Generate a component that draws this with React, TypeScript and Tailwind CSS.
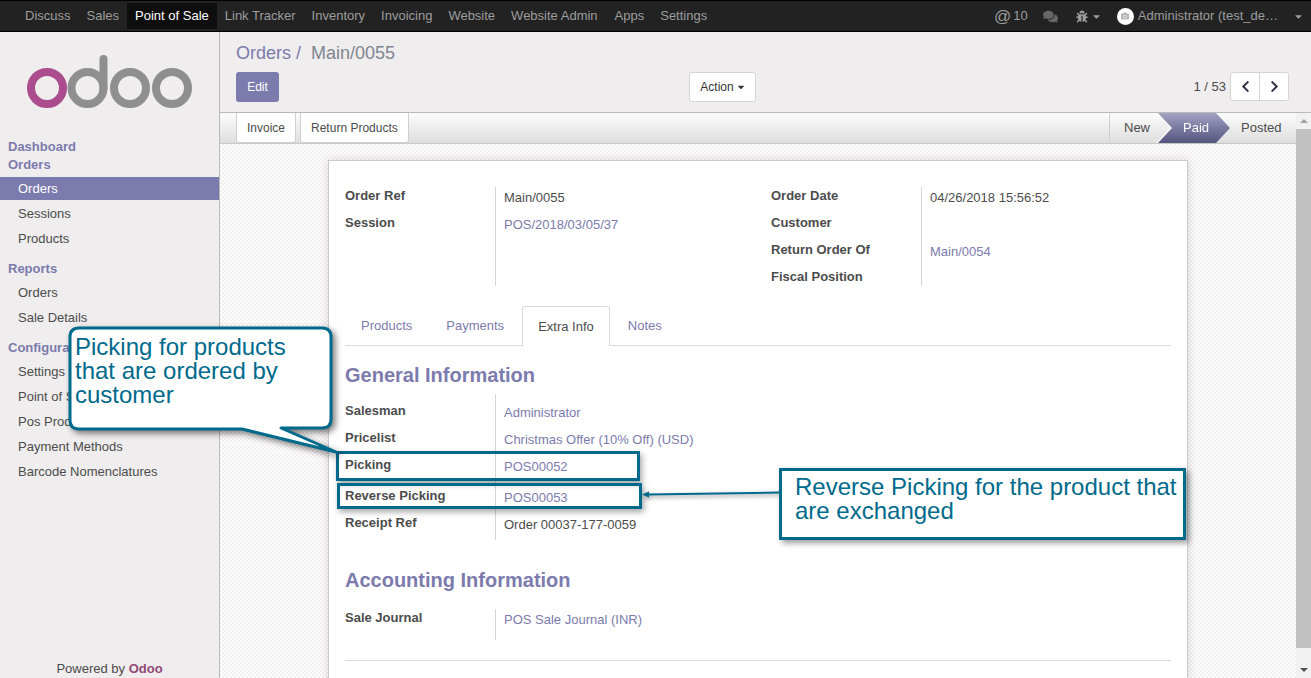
import { FaBug, FaCaretDown, FaCamera, FaChevronLeft, FaChevronRight, FaComments } from "react-icons/fa";

const navItems = ["Discuss", "Sales", "Point of Sale", "Link Tracker", "Inventory", "Invoicing", "Website", "Website Admin", "Apps", "Settings"];

type Row = { label: string; value?: string; link?: boolean; extra?: string };

const MenuHead = ({ text, className = "" }: { text: string; className?: string }) => (
  <div className={`h-[18px] pl-2 text-[13px] leading-[18px] font-bold text-[#7c7bad] ${className}`}>{text}</div>
);

const MenuItem = ({ text, active, className = "mt-[2px]" }: { text: string; active?: boolean; className?: string }) => (
  <div className={`h-[23px] pl-[18px] text-[13px] leading-[23px] ${active ? "bg-[#7c7bad] text-white" : "text-[#4c4c4c]"} ${className}`}>{text}</div>
);

const FieldGroup = ({
  rows,
  height,
  width,
  labelPad = "",
  valuePad = "pt-px",
}: {
  rows: Row[];
  height: string;
  width: string;
  labelPad?: string;
  valuePad?: string;
}) => (
  <div className={`flex ${height} ${width}`}>
    <div className={`w-[150px] ${labelPad}`}>
      {rows.map((r) => (
        <div key={r.label} className={`h-[27px] text-[13px] leading-[18px] font-bold text-[#4c4c4c] ${r.extra ?? ""}`}>{r.label}</div>
      ))}
    </div>
    <div className={`flex-1 overflow-hidden border-l border-[#d5d5d5] pl-2 ${valuePad}`}>
      {rows.map((r) => (
        <div key={r.label} className={`h-[27px] text-[13px] leading-[20px] ${r.link ? "text-[#7c7bad]" : "text-[#4c4c4c]"} ${r.extra ?? ""}`}>{r.value}</div>
      ))}
    </div>
  </div>
);

export default function App() {
  return (
    <div className="relative flex h-[678px] w-[1311px] flex-col overflow-hidden bg-white font-['Liberation_Sans',Arial,sans-serif] text-[13px] text-[#4c4c4c]">
      {/* top bar */}
      <div className="flex h-[32px] shrink-0 items-center border-y border-black bg-[#222222] pl-[17px]">
        {navItems.map((n) => (
          <div key={n} className={`h-[26px] px-2 text-[13px] leading-[26px] ${n === "Point of Sale" ? "bg-[#0e0e0e] text-white" : "text-[#9d9d9d]"} ${n === "Apps" ? "ml-px" : ""}`}>{n}</div>
        ))}
        <div className="ml-auto flex items-center text-[#9d9d9d]">
          <span className="text-[17px] leading-none">@</span>
          <span className="ml-[2px] text-[13px]">10</span>
          <FaComments className="ml-[15px] h-[15px] w-[15px] text-[#666666]" />
          <FaBug className="ml-[18px] h-[13px] w-[12px]" />
          <FaCaretDown className="ml-[4px] h-[11px] w-[9px]" />
          <div className="ml-[16px] flex h-[17px] w-[17px] items-center justify-center rounded-full bg-white">
            <FaCamera className="h-[8px] w-[8px] text-[#b5b5b5]" />
          </div>
          <span className="ml-[4px] text-[13px]">Administrator (test_de…</span>
          <FaCaretDown className="mr-[8px] ml-[16px] h-[11px] w-[9px]" />
        </div>
      </div>

      <div className="flex min-h-0 flex-1">
        {/* sidebar */}
        <div className="flex w-[220px] shrink-0 flex-col border-r border-[#b9b9b9] bg-[#efeded]">
          <div className="h-[106px] shrink-0">
            <svg width="219" height="105" viewBox="0 32 219 105">
              <circle cx="47" cy="88" r="16" fill="none" stroke="#ab4c8e" strokeWidth="8" />
              <g fill="none" stroke="#8f8f8f" strokeWidth="8">
                <circle cx="87.5" cy="88" r="16" />
                <path d="M103.5 88 V59" strokeLinecap="round" />
                <circle cx="130" cy="88" r="16" />
                <circle cx="172" cy="88" r="16" />
              </g>
            </svg>
          </div>
          <MenuHead text="Dashboard" />
          <MenuHead text="Orders" />
          <MenuItem text="Orders" active className="mt-[3px]" />
          <MenuItem text="Sessions" />
          <MenuItem text="Products" />
          <MenuHead text="Reports" className="mt-[10px]" />
          <MenuItem text="Orders" className="mt-[3px]" />
          <MenuItem text="Sale Details" />
          <MenuHead text="Configuration" className="mt-[10px]" />
          <MenuItem text="Settings" className="mt-[3px]" />
          <MenuItem text="Point of Sale" />
          <MenuItem text="Pos Products" />
          <MenuItem text="Payment Methods" />
          <MenuItem text="Barcode Nomenclatures" />
          <div className="mt-auto text-center text-[13px] leading-[18px] text-[#4c4c4c]">
            Powered by <span className="font-bold text-[#8f4a78]">Odoo</span>
          </div>
        </div>

        {/* main */}
        <div className="flex min-w-0 flex-1 flex-col">
          <div className="h-[81px] shrink-0 border-b border-[#b9b9b9] bg-[#efeded] pl-4">
            <div className="pt-[9px] text-[18px] leading-[24px] text-[#7f8593]">
              <span className="text-[#7c7bad]">Orders /</span>
              <span className="ml-[10px]">Main/0055</span>
            </div>
            <div className="mt-[7px] flex items-start">
              <div className="h-[30px] w-[43px] rounded-[3px] bg-[#7c7bad] text-center text-[12px] leading-[30px] text-white">Edit</div>
              <div className="ml-[410px] flex h-[30px] w-[67px] items-center justify-center gap-[3px] rounded-[3px] border border-[#d5d5d5] bg-white text-[12px] text-[#333333]">
                Action <FaCaretDown className="h-[10px] w-[8px]" />
              </div>
              <div className="mr-[22px] ml-auto flex items-center">
                <span className="mr-[4px] text-[13px] text-[#4c4c4c]">1 / 53</span>
                <div className="flex h-[29px] w-[59px] rounded-[3px] border border-[#d5d5d5] bg-white text-[#333344]">
                  <div className="flex flex-1 items-center justify-center border-r border-[#d5d5d5]"><FaChevronLeft className="h-[13px] w-[13px]" /></div>
                  <div className="flex flex-1 items-center justify-center"><FaChevronRight className="h-[13px] w-[13px]" /></div>
                </div>
              </div>
            </div>
          </div>

          <div className="flex min-h-0 flex-1">
            <div className="flex min-w-0 flex-1 flex-col">
              {/* statusbar */}
              <div className="flex h-[31px] shrink-0 items-start border-b border-[#c8c8c8] bg-gradient-to-b from-[#fcfcfc] to-[#dedede] pl-4">
                <div className="flex h-[30px] items-center rounded-b-[3px] border border-t-0 border-[#d0d0d0] bg-white px-[10px] text-[12px] text-[#4c4c4c]">Invoice</div>
                <div className="ml-[4px] flex h-[30px] items-center rounded-b-[3px] border border-t-0 border-[#d0d0d0] bg-white px-[10px] text-[12px] text-[#4c4c4c]">Return Products</div>
                <div className="ml-auto flex h-[30px] rounded-l-[3px] border-l border-[#cfcfcf] text-[13px] leading-[29px]">
                  <div className="w-[48px] pl-[14px] text-[#4c4c4c]">New</div>
                  <div className="[filter:drop-shadow(-2px_0_0_#fafafa)]">
                    <div className="h-[30px] w-[72px] bg-gradient-to-b from-[#a3a3c4] to-[#55557f] pl-[25px] text-white [clip-path:polygon(0_0,58px_0,72px_50%,58px_100%,0_100%,14px_50%)]">Paid</div>
                  </div>
                  <div className="w-[66px] pl-[11px] text-[#4c4c4c]">Posted</div>
                </div>
              </div>

              {/* form */}
              <div className="min-h-0 flex-1 bg-[repeating-conic-gradient(#f2f0f0_0_25%,#ffffff_0_50%)] bg-[length:4px_4px] pl-[108px] pt-4">
                <div className="h-[600px] w-[860px] border border-[#c9c9d4] bg-white px-4 pt-[26px] shadow-[0_0_10px_rgba(0,0,0,0.15)]">
                  <div className="flex">
                    <FieldGroup
                      width="w-[426px]"
                      height="h-[99px]"
                      rows={[
                        { label: "Order Ref", value: "Main/0055" },
                        { label: "Session", value: "POS/2018/03/05/37", link: true },
                      ]}
                    />
                    <FieldGroup
                      width="w-[400px]"
                      height="h-[99px]"
                      rows={[
                        { label: "Order Date", value: "04/26/2018 15:56:52" },
                        { label: "Customer" },
                        { label: "Return Order Of", value: "Main/0054", link: true },
                        { label: "Fiscal Position" },
                      ]}
                    />
                  </div>

                  <div className="mt-[20px] flex h-[40px] border-b border-[#d9d9d9] text-[13px] leading-[40px] text-[#7c7bad]">
                    <div className="mr-[2px] px-4">Products</div>
                    <div className="mr-[2px] px-4">Payments</div>
                    <div className="mr-[2px] h-[40px] rounded-t-[3px] border border-b-0 border-[#d9d9d9] bg-white px-[15px] text-[#4c4c4c]">Extra Info</div>
                    <div className="px-4">Notes</div>
                  </div>

                  <h2 className="mt-[18px] text-[20px] leading-[22px] font-bold text-[#7c7bad]">General Information</h2>
                  <div className="mt-[8px]">
                    <FieldGroup
                      width="w-full"
                      height="h-[146px]"
                      labelPad="pt-[8px]"
                      valuePad="pt-[9px]"
                      rows={[
                        { label: "Salesman", value: "Administrator", link: true },
                        { label: "Pricelist", value: "Christmas Offer (10% Off) (USD)", link: true },
                        { label: "Picking", value: "POS00052", link: true },
                        { label: "Reverse Picking", value: "POS00053", link: true, extra: "mt-[4px]" },
                        { label: "Receipt Ref", value: "Order 00037-177-0059" },
                      ]}
                    />
                  </div>

                  <h2 className="mt-[29px] text-[20px] leading-[22px] font-bold text-[#7c7bad]">Accounting Information</h2>
                  <div className="mt-[18px]">
                    <FieldGroup
                      width="w-full"
                      height="h-[31px]"
                      rows={[{ label: "Sale Journal", value: "POS Sale Journal (INR)", link: true }]}
                    />
                  </div>
                  <div className="mt-[20px] border-t border-[#d9d9d9]" />
                </div>
              </div>
            </div>

            {/* scrollbar */}
            <div className="flex w-[15px] shrink-0 flex-col items-center bg-[#f1f1f1]">
              <div className="mt-[6px] h-0 w-0 border-x-[4px] border-b-[4px] border-x-transparent border-b-[#a3a3a3]" />
              <div className="mt-[6px] h-[519px] w-full bg-[#c1c1c1]" />
              <div className="mt-auto mb-[6px] h-0 w-0 border-x-[4px] border-t-[4px] border-x-transparent border-t-[#505050]" />
            </div>
          </div>
        </div>
      </div>

      {/* annotations drawn over the page */}
      <div className="absolute top-[451px] left-[336px] h-[30px] w-[304px] border-[3px] border-[#006a8c] shadow-[2px_3px_6px_rgba(0,0,0,0.35)]" />
      <div className="absolute top-[483px] left-[337px] h-[26px] w-[305px] border-[3px] border-[#006a8c] shadow-[2px_3px_6px_rgba(0,0,0,0.35)]" />

      <svg className="absolute top-[320px] left-[60px] drop-shadow-[3px_3px_3px_rgba(0,0,0,0.5)]" width="290" height="140" viewBox="60 320 290 140">
        <path
          d="M79 328 H322 Q331 328 331 337 V419 Q331 428 322 428 H281 L336 452 L242 429 H79 Q70 429 70 420 V337 Q70 328 79 328 Z"
          fill="#ffffff"
          stroke="#006a8c"
          strokeWidth="3"
          strokeLinejoin="round"
        />
      </svg>
      <div className="absolute top-[335px] left-[75px] w-[250px] text-[24px] leading-[24px] text-[#006a8c]">
        Picking for products that are ordered by customer
      </div>

      <svg className="absolute top-[485px] left-[640px] drop-shadow-[1px_2px_2px_rgba(0,0,0,0.45)]" width="145" height="16" viewBox="640 485 145 16">
        <path d="M780 492.5 L648 494.5" stroke="#006a8c" strokeWidth="2" fill="none" />
        <path d="M642 494.6 L649 491.5 L649 497.5 Z" fill="#006a8c" />
      </svg>
      <div className="absolute top-[468px] left-[779px] h-[72px] w-[407px] border-[3px] border-[#006a8c] bg-white pt-[4px] pl-[13px] text-[24px] leading-[24px] text-[#006a8c] shadow-[3px_3px_6px_rgba(0,0,0,0.4)]">
        Reverse Picking for the product that are exchanged
      </div>
    </div>
  );
}
